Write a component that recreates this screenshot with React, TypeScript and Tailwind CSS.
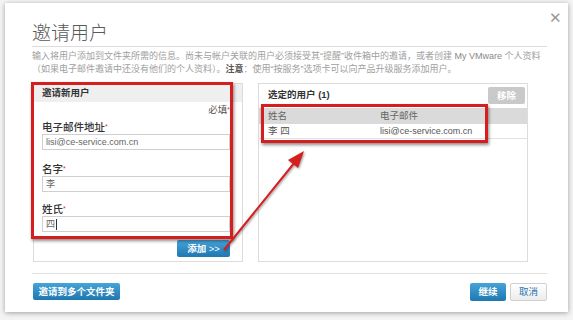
import React from "react";

const font = { fontFamily: '"Liberation Sans", "Noto Sans CJK SC", sans-serif' };

function Field({ label, value, cursor }: { label: string; value: string; cursor?: boolean }) {
  return (
    <div>
      <div className="text-[10.5px] leading-[12px] font-medium text-[#333]">
        {label}
        <span className="text-[#d33] text-[7px] align-top">*</span>
      </div>
      <div className="mt-[1px] h-[16px] border border-[#cfcfcf] bg-white px-[3px] text-[9px] leading-[14px] text-[#666] flex items-center">
        {value}
        {cursor && <span className="ml-[1px] inline-block w-px h-[11px] bg-[#333]" />}
      </div>
    </div>
  );
}

export default function App() {
  return (
    <div className="relative w-[573px] h-[320px] bg-[#f4f4f4] overflow-hidden" style={font}>
      {/* Dialog */}
      <div className="absolute left-[5px] top-[3px] w-[563px] h-[309px] bg-white shadow-[0_1px_5px_rgba(0,0,0,0.35)] pl-[27px] pr-[21px]">
        <div className="relative border-b border-[#dcdcdc] pt-[19px]">
          <div className="text-[19px] leading-[24px] text-[#5a5a5a] font-light">邀请用户</div>
          <div className="absolute right-[-15px] top-[7px] text-[15px] leading-[15px] text-[#999]">✕</div>
        </div>
        <div className="mt-[3px] text-[9px] leading-[13px] text-[#a0a0a0]">
          <div>输入将用户添加到文件夹所需的信息。尚未与帐户关联的用户必须接受其“提醒”收件箱中的邀请，或者创建 <span className="text-[#888]">My VMware</span> 个人资料</div>
          <div>（如果电子邮件邀请中还没有他们的个人资料）。<b className="text-[#555]">注意</b>：使用“按服务”选项卡可以向产品升级服务添加用户。</div>
        </div>

        <div className="mt-[7px] flex gap-[15px] h-[179px] pl-[1px]">
          {/* Left panel */}
          <div className="w-[210px] border border-[#dcdcdc] flex flex-col">
            <div className="h-[18px] bg-[#efefef] px-[8px] text-[9.5px] leading-[18px] font-bold text-[#333]">邀请新用户</div>
            <div className="pl-[8px] pr-[12px]">
              <div className="text-right text-[9.5px] leading-[12px] text-[#555] mt-[2px]">
                必填<span className="text-[#d33] text-[7px] align-top">*</span>
              </div>
              <div className="mt-[5px]">
                <Field label="电子邮件地址" value="lisi@ce-service.com.cn" />
              </div>
              <div className="mt-[13px]">
                <Field label="名字" value="李" />
              </div>
              <div className="mt-[11px]">
                <Field label="姓氏" value="四" cursor />
              </div>
              <div className="mt-[8px] flex justify-end">
                <div className="h-[17px] w-[53px] rounded-[2px] bg-gradient-to-b from-[#45a4d8] to-[#1f77b0] text-white text-[9.5px] leading-[17px] font-bold text-center">
                  添加 <span className="font-normal">&gt;&gt;</span>
                </div>
              </div>
            </div>
          </div>

          {/* Right panel */}
          <div className="w-[270px] border border-[#dcdcdc] flex flex-col">
            <div className="h-[23px] flex items-center justify-between pl-[9px] pr-[2px]">
              <span className="text-[9.5px] font-bold text-[#333]">选定的用户 (1)</span>
              <div className="h-[17px] w-[37px] rounded-[2px] bg-[#c9c9c9] text-white text-[9.5px] leading-[17px] font-bold text-center">移除</div>
            </div>
            <div className="mt-[1px] h-[16px] bg-[#dadada] flex text-[9.5px] leading-[16px] text-[#666]">
              <span className="pl-[9px] w-[121px]">姓名</span>
              <span>电子邮件</span>
            </div>
            <div className="h-[15px] border-b border-[#e2e2e2] flex text-[9px] leading-[14px] text-[#555]">
              <span className="pl-[9px] w-[121px] text-[9.5px]">李 四</span>
              <span>lisi@ce-service.com.cn</span>
            </div>
          </div>
        </div>

        <div className="mt-[11px] border-t border-[#e0e0e0] pt-[9px] flex justify-between pl-[1px]">
          <div className="h-[17px] w-[87px] rounded-[2px] bg-gradient-to-b from-[#45a4d8] to-[#1f77b0] text-white text-[9.5px] leading-[17px] font-bold text-center">邀请到多个文件夹</div>
          <div className="flex gap-[4px]">
            <div className="h-[18px] w-[36px] rounded-[2px] bg-gradient-to-b from-[#45a4d8] to-[#1f77b0] text-white text-[9.5px] leading-[18px] font-bold text-center">继续</div>
            <div className="h-[18px] w-[37px] rounded-[2px] border border-[#d0d0d0] bg-gradient-to-b from-[#ffffff] to-[#ececec] text-[#2a75b0] text-[9.5px] leading-[16px] text-center">取消</div>
          </div>
        </div>
      </div>

      {/* Annotations */}
      <div className="absolute left-[31px] top-[82px] w-[202px] h-[157px] border-[3px] border-[#d71e1e] shadow-[1px_2px_3px_rgba(0,0,0,0.45)]" />
      <div className="absolute left-[261px] top-[104px] w-[227px] h-[39px] border-[3px] border-[#d71e1e] shadow-[1px_2px_3px_rgba(0,0,0,0.45)]" />
      <svg className="absolute left-0 top-0" width="573" height="320" viewBox="0 0 573 320">
        <g style={{ filter: "drop-shadow(1px 1px 1px rgba(0,0,0,0.4))" }}>
          <line x1="224" y1="250" x2="295" y2="162" stroke="#d71e1e" strokeWidth="2" />
          <polygon points="304,151 298,168 288,160" fill="#d71e1e" />
        </g>
      </svg>
    </div>
  );
}
